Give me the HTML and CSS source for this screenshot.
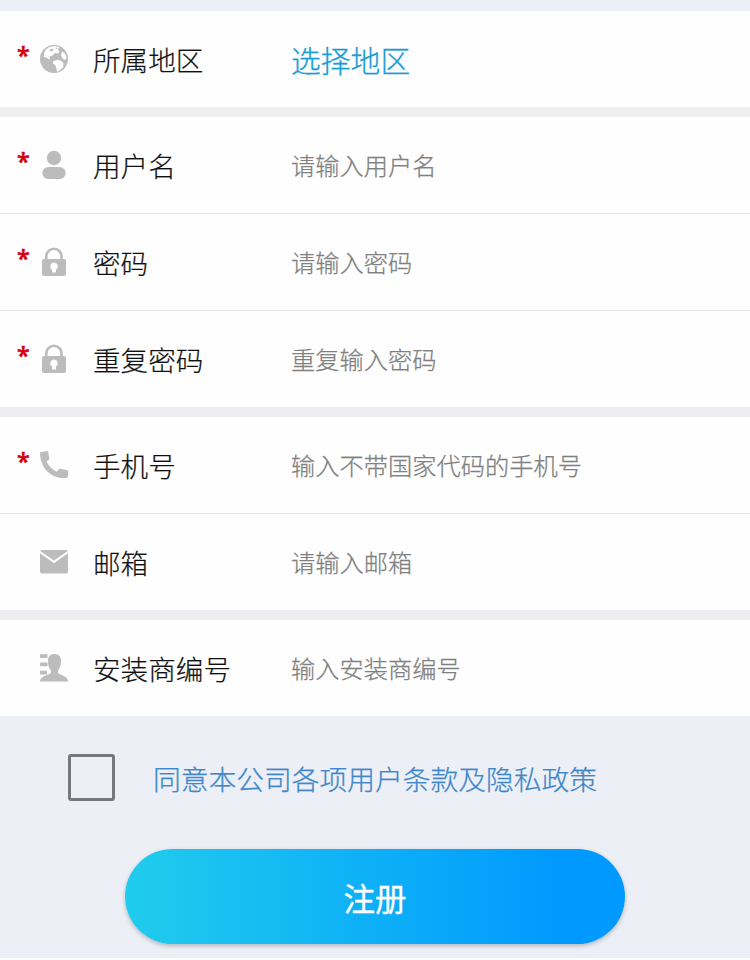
FILE: index.html
```html
<!DOCTYPE html>
<html lang="zh-CN">
<head>
<meta charset="utf-8">
<title>注册</title>
<link rel="stylesheet" href="styles.css">
</head>
<body>
<svg width="0" height="0" class="defs">
  <symbol id="lock" viewBox="0 0 30 30">
    <path fill="none" stroke="currentColor" stroke-width="2.6" d="M7.300 13V9.400a7.600 7.600 0 0 1 15.200 0V13"/>
    <path fill="currentColor" fill-rule="evenodd" d="M5 12h20a2 2 0 0 1 2 2v12.500a2.500 2.500 0 0 1-2.500 2.500h-19A2.500 2.500 0 0 1 3 26.500V14a2 2 0 0 1 2-2zM15 15.500a3.800 3.800 0 0 0-2 7v3h4v-3a3.800 3.800 0 0 0-2-7z"/>
  </symbol>
</svg>
<form class="form">
  <section class="group">
    <div class="row">
      <span class="star">*</span>
      <svg class="icon" viewBox="0 0 30 30"><circle cx="15" cy="15" r="14" fill="#bcbcbc"/><path fill="#fff" d="M6 6.500 9.500 3.500 15 2l5 1-1 3 1.500 1.500-1.500 2-3.500-.5-1.500 2-3 2-.5 2.500-2.500-1.500-3-1L5 10z M23 7.500l3 2 1.500 4-1 2.500-2.500-1-2-3.500z M14.500 17l4-1.200 4 1.200 2 2.500-.5 4-3 2.500-3 2-.5-3.500-1-3-2.500-2z"/><path fill="#bcbcbc" d="m10 6 3-1.300 2 .8-2.500 2.200zM16.500 3.500l2 .5-1.500 1.500zM9 13l3-1v1.500z"/></svg>
      <span class="label">所属地区</span><span class="pick">选择地区</span>
    </div>
  </section>
  <section class="group">
    <div class="row">
      <span class="star">*</span>
      <svg class="icon" viewBox="0 0 30 30" fill="currentColor"><circle cx="15" cy="8" r="7.200"/><rect x="3.300" y="17" width="23.400" height="12" rx="6"/></svg>
      <span class="label">用户名</span><span class="hint">请输入用户名</span>
    </div>
    <div class="row">
      <span class="star">*</span>
      <svg class="icon"><use href="#lock"/></svg>
      <span class="label">密码</span><span class="hint">请输入密码</span>
    </div>
    <div class="row">
      <span class="star">*</span>
      <svg class="icon"><use href="#lock"/></svg>
      <span class="label">重复密码</span><span class="hint">重复输入密码</span>
    </div>
  </section>
  <section class="group">
    <div class="row">
      <span class="star">*</span>
      <svg class="icon" viewBox="0 0 30 30" fill="currentColor"><path d="M1 2.200 9 1l1.300 7.500q0 1.800-2.800 3 3.200 6.700 10.300 10.300 1.800-3.300 3.700-3.100l7.700 1.800v5.500q-.5 2-3 2.100C12 28.600 1 18 1 2.200z"/></svg>
      <span class="label">手机号</span><span class="hint">输入不带国家代码的手机号</span>
    </div>
    <div class="row">
      <span class="star"></span>
      <svg class="icon" viewBox="0 0 30 30" fill="currentColor"><path d="M3 3h24a2 2 0 0 1 1.800 1L15 13.500 1.200 4A2 2 0 0 1 3 3z"/><path d="M1 6.300 15 16.200 29 6.300V24a2.600 2.600 0 0 1-2.600 2.600H3.600A2.600 2.600 0 0 1 1 24z"/></svg>
      <span class="label">邮箱</span><span class="hint">请输入邮箱</span>
    </div>
  </section>
  <section class="group">
    <div class="row">
      <span class="star"></span>
      <svg class="icon" viewBox="0 0 30 30" fill="currentColor"><path d="M1 1.200h7.500v3.800H1zM1 9.500h7.500v3.800H1zM1 17.800h7v3.800H1z"/><path d="M15.500 1c4.800 0 6.500 3 6.500 7.200 0 4-1.300 7.300-3 9.300v2.300c1 2 10.200 3 10.200 8.700H1c0-5.500 9.500-6.700 11-8.700v-2.300c-2-2-3-5.300-3-9.300C9 4 10.700 1 15.500 1z"/></svg>
      <span class="label">安装商编号</span><span class="hint">输入安装商编号</span>
    </div>
  </section>
  <div class="agree"><span class="box"></span><span class="terms">同意本公司各项用户条款及隐私政策</span></div>
  <button class="submit" type="button">注册</button>
</form>
</body>
</html>
```
FILE: styles.css
```css
* { box-sizing: border-box; }
body {
  margin: 0;
  height: 960px;
  overflow: hidden;
  background: #fff;
  font-family: "Noto Sans CJK SC", sans-serif;
  font-weight: 300;
}
.defs { display: block; }
.form {
  height: 958px;
  padding-top: 11px;
  background: #edeff6;
}
.group {
  border-bottom: 10px solid #eeeef0;
  background: #fefefe;
}
.group:nth-of-type(4) { border-bottom: 0; }
.row {
  display: grid;
  grid-template-columns: 22px 54px 198px 1fr;
  align-items: center;
  height: 96px;
  padding-left: 17px;
  white-space: nowrap;
}
.row + .row {
  height: 97px;
  border-top: 1px solid #e8e8e8;
}
.star {
  height: 42px;
  color: #d5000f;
  font: 500 23px/34px "Noto Sans", sans-serif;
  -webkit-text-stroke: .6px;
}
.icon {
  width: 30px;
  height: 30px;
  color: #bcbcbc;
}
.label {
  color: #111;
  font-size: 27.6px;
  line-height: 40px;
  -webkit-text-stroke: .2px;
}
.hint {
  color: #808080;
  font-size: 24.25px;
  line-height: 36px;
  -webkit-text-stroke: .25px;
}
.pick {
  color: #169bd5;
  font-size: 29.8px;
  line-height: 42px;
  -webkit-text-stroke: .3px;
}
.agree {
  display: flex;
  align-items: center;
  gap: 38px;
  height: 48px;
  margin: 37px 0 0 68px;
}
.box {
  width: 47px;
  height: 47px;
  border: 3px solid #77787f;
  border-radius: 3px;
}
.terms {
  padding-top: 1px;
  color: #3d87ca;
  font-size: 27.75px;
  line-height: 40px;
  -webkit-text-stroke: .25px;
}
.submit {
  display: block;
  width: 500px;
  height: 95px;
  margin: 48px 0 0 125px;
  padding: 0;
  border: 0;
  border-radius: 48px;
  background: linear-gradient(90deg, #20ccec, #0099ff 88%);
  box-shadow: 0 2px 4px rgba(80, 80, 90, .35);
  color: #fff;
  font: 400 31.5px/44px "Noto Sans CJK SC", sans-serif;
  -webkit-text-stroke: .3px;
}
```
